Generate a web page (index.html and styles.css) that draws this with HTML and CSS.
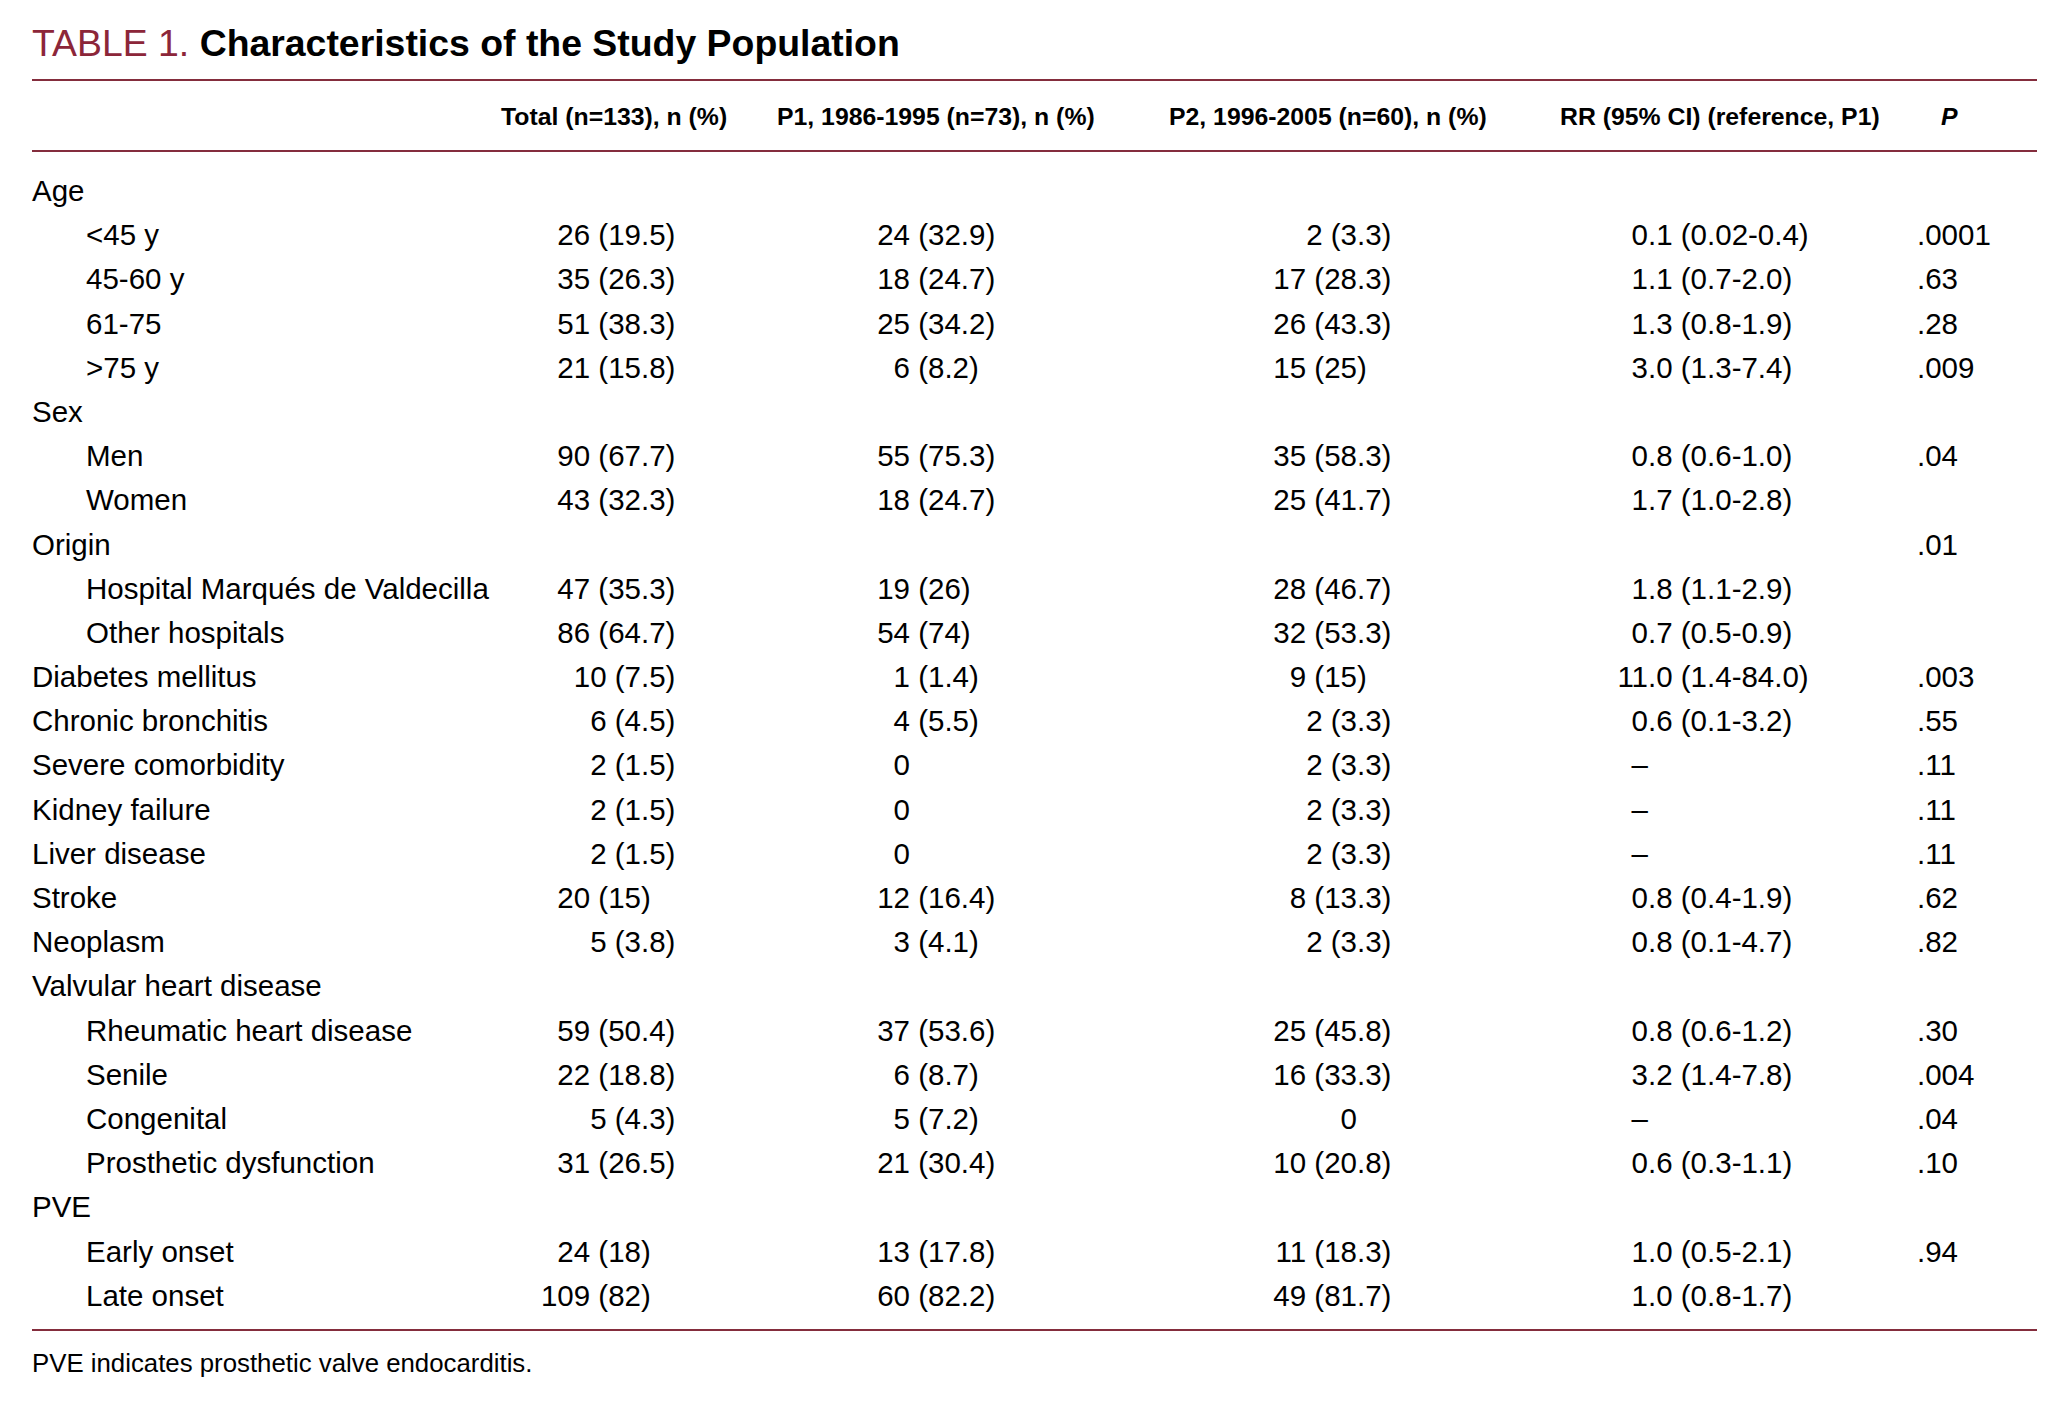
FILE: index.html
```html
<!DOCTYPE html>
<html lang="en">
<head>
<meta charset="utf-8">
<title>Table 1. Characteristics of the Study Population</title>
<link rel="stylesheet" href="styles.css">
</head>
<body>
<div class="wrap">
  <h1 class="title"><span class="num">TABLE 1.</span> <span class="name">Characteristics of the Study Population</span></h1>
  <div class="thead">
    <div></div>
    <div>Total (n=133), n (%)</div>
    <div>P1, 1986-1995 (n=73), n (%)</div>
    <div>P2, 1996-2005 (n=60), n (%)</div>
    <div>RR (95% CI) (reference, P1)</div>
    <div class="ph"><i>P</i></div>
  </div>
  <div class="tbody">
    <div class="row"><div class="lab">Age</div></div>
    <div class="row"><div class="lab in">&lt;45 y</div><div class="c c1"><span class="a">26 (19</span>.5)</div><div class="c c2"><span class="a">24</span> (32.9)</div><div class="c c3"><span class="a">2 (3</span>.3)</div><div class="c c4"><span class="a">0</span>.1 (0.02-0.4)</div><div class="c c5">.0001</div></div>
    <div class="row"><div class="lab in">45-60 y</div><div class="c c1"><span class="a">35 (26</span>.3)</div><div class="c c2"><span class="a">18</span> (24.7)</div><div class="c c3"><span class="a">17 (28</span>.3)</div><div class="c c4"><span class="a">1</span>.1 (0.7-2.0)</div><div class="c c5">.63</div></div>
    <div class="row"><div class="lab in">61-75</div><div class="c c1"><span class="a">51 (38</span>.3)</div><div class="c c2"><span class="a">25</span> (34.2)</div><div class="c c3"><span class="a">26 (43</span>.3)</div><div class="c c4"><span class="a">1</span>.3 (0.8-1.9)</div><div class="c c5">.28</div></div>
    <div class="row"><div class="lab in">&gt;75 y</div><div class="c c1"><span class="a">21 (15</span>.8)</div><div class="c c2"><span class="a">6</span> (8.2)</div><div class="c c3"><span class="a">15 (25</span>)</div><div class="c c4"><span class="a">3</span>.0 (1.3-7.4)</div><div class="c c5">.009</div></div>
    <div class="row"><div class="lab">Sex</div></div>
    <div class="row"><div class="lab in">Men</div><div class="c c1"><span class="a">90 (67</span>.7)</div><div class="c c2"><span class="a">55</span> (75.3)</div><div class="c c3"><span class="a">35 (58</span>.3)</div><div class="c c4"><span class="a">0</span>.8 (0.6-1.0)</div><div class="c c5">.04</div></div>
    <div class="row"><div class="lab in">Women</div><div class="c c1"><span class="a">43 (32</span>.3)</div><div class="c c2"><span class="a">18</span> (24.7)</div><div class="c c3"><span class="a">25 (41</span>.7)</div><div class="c c4"><span class="a">1</span>.7 (1.0-2.8)</div><div class="c c5"></div></div>
    <div class="row"><div class="lab">Origin</div><div class="c c1"></div><div class="c c2"></div><div class="c c3"></div><div class="c c4"></div><div class="c c5">.01</div></div>
    <div class="row"><div class="lab in">Hospital Marqués de Valdecilla</div><div class="c c1"><span class="a">47 (35</span>.3)</div><div class="c c2"><span class="a">19</span> (26)</div><div class="c c3"><span class="a">28 (46</span>.7)</div><div class="c c4"><span class="a">1</span>.8 (1.1-2.9)</div><div class="c c5"></div></div>
    <div class="row"><div class="lab in">Other hospitals</div><div class="c c1"><span class="a">86 (64</span>.7)</div><div class="c c2"><span class="a">54</span> (74)</div><div class="c c3"><span class="a">32 (53</span>.3)</div><div class="c c4"><span class="a">0</span>.7 (0.5-0.9)</div><div class="c c5"></div></div>
    <div class="row"><div class="lab">Diabetes mellitus</div><div class="c c1"><span class="a">10 (7</span>.5)</div><div class="c c2"><span class="a">1</span> (1.4)</div><div class="c c3"><span class="a">9 (15</span>)</div><div class="c c4"><span class="a">11</span>.0 (1.4-84.0)</div><div class="c c5">.003</div></div>
    <div class="row"><div class="lab">Chronic bronchitis</div><div class="c c1"><span class="a">6 (4</span>.5)</div><div class="c c2"><span class="a">4</span> (5.5)</div><div class="c c3"><span class="a">2 (3</span>.3)</div><div class="c c4"><span class="a">0</span>.6 (0.1-3.2)</div><div class="c c5">.55</div></div>
    <div class="row"><div class="lab">Severe comorbidity</div><div class="c c1"><span class="a">2 (1</span>.5)</div><div class="c c2"><span class="a">0</span></div><div class="c c3"><span class="a">2 (3</span>.3)</div><div class="c c4"><span class="a">–</span></div><div class="c c5">.11</div></div>
    <div class="row"><div class="lab">Kidney failure</div><div class="c c1"><span class="a">2 (1</span>.5)</div><div class="c c2"><span class="a">0</span></div><div class="c c3"><span class="a">2 (3</span>.3)</div><div class="c c4"><span class="a">–</span></div><div class="c c5">.11</div></div>
    <div class="row"><div class="lab">Liver disease</div><div class="c c1"><span class="a">2 (1</span>.5)</div><div class="c c2"><span class="a">0</span></div><div class="c c3"><span class="a">2 (3</span>.3)</div><div class="c c4"><span class="a">–</span></div><div class="c c5">.11</div></div>
    <div class="row"><div class="lab">Stroke</div><div class="c c1"><span class="a">20 (15</span>)</div><div class="c c2"><span class="a">12</span> (16.4)</div><div class="c c3"><span class="a">8 (13</span>.3)</div><div class="c c4"><span class="a">0</span>.8 (0.4-1.9)</div><div class="c c5">.62</div></div>
    <div class="row"><div class="lab">Neoplasm</div><div class="c c1"><span class="a">5 (3</span>.8)</div><div class="c c2"><span class="a">3</span> (4.1)</div><div class="c c3"><span class="a">2 (3</span>.3)</div><div class="c c4"><span class="a">0</span>.8 (0.1-4.7)</div><div class="c c5">.82</div></div>
    <div class="row"><div class="lab">Valvular heart disease</div></div>
    <div class="row"><div class="lab in">Rheumatic heart disease</div><div class="c c1"><span class="a">59 (50</span>.4)</div><div class="c c2"><span class="a">37</span> (53.6)</div><div class="c c3"><span class="a">25 (45</span>.8)</div><div class="c c4"><span class="a">0</span>.8 (0.6-1.2)</div><div class="c c5">.30</div></div>
    <div class="row"><div class="lab in">Senile</div><div class="c c1"><span class="a">22 (18</span>.8)</div><div class="c c2"><span class="a">6</span> (8.7)</div><div class="c c3"><span class="a">16 (33</span>.3)</div><div class="c c4"><span class="a">3</span>.2 (1.4-7.8)</div><div class="c c5">.004</div></div>
    <div class="row"><div class="lab in">Congenital</div><div class="c c1"><span class="a">5 (4</span>.3)</div><div class="c c2"><span class="a">5</span> (7.2)</div><div class="c c3"><span class="a">0</span></div><div class="c c4"><span class="a">–</span></div><div class="c c5">.04</div></div>
    <div class="row"><div class="lab in">Prosthetic dysfunction</div><div class="c c1"><span class="a">31 (26</span>.5)</div><div class="c c2"><span class="a">21</span> (30.4)</div><div class="c c3"><span class="a">10 (20</span>.8)</div><div class="c c4"><span class="a">0</span>.6 (0.3-1.1)</div><div class="c c5">.10</div></div>
    <div class="row"><div class="lab">PVE</div></div>
    <div class="row"><div class="lab in">Early onset</div><div class="c c1"><span class="a">24 (18</span>)</div><div class="c c2"><span class="a">13</span> (17.8)</div><div class="c c3"><span class="a">11 (18</span>.3)</div><div class="c c4"><span class="a">1</span>.0 (0.5-2.1)</div><div class="c c5">.94</div></div>
    <div class="row"><div class="lab in">Late onset</div><div class="c c1"><span class="a">109 (82</span>)</div><div class="c c2"><span class="a">60</span> (82.2)</div><div class="c c3"><span class="a">49 (81</span>.7)</div><div class="c c4"><span class="a">1</span>.0 (0.8-1.7)</div><div class="c c5"></div></div>
  </div>
  <p class="foot">PVE indicates prosthetic valve endocarditis.</p>
</div>
</body>
</html>
```
FILE: styles.css
```css
html, body {
  margin: 0;
  background: #ffffff;
}

body {
  padding: 22px 29px 0 32px;
  font-family: "Liberation Sans", Arial, Helvetica, sans-serif;
  color: #000000;
}

.wrap {
  width: 2005px;
}

.title {
  margin: 0 0 15px;
  font-size: 37.4px;
  line-height: 42px;
  font-weight: normal;
  white-space: nowrap;
}

.title .num {
  color: #8c2639;
}

.title .name {
  font-weight: bold;
}

.thead,
.row {
  display: grid;
  grid-template-columns: 469px 276px 392px 391px 357px 120px;
}

.thead {
  border-top: 2px solid #842d3d;
  border-bottom: 2px solid #842d3d;
  padding: 21px 0 18px;
  font-size: 24.8px;
  line-height: 30px;
  font-weight: bold;
  white-space: nowrap;
}

.thead .ph {
  padding-left: 24px;
}

.tbody {
  padding: 17px 0 11px;
  border-bottom: 2px solid #842d3d;
}

.row {
  font-size: 29.5px;
  line-height: 44.2px;
  height: 44.2px;
  white-space: pre;
}

.lab.in {
  padding-left: 54px;
}

.c .a {
  display: inline-block;
  text-align: right;
}

.c1 .a {
  width: 140px;
}

.c2 .a {
  width: 133px;
}

.c3 .a {
  width: 188px;
}

.c4 .a {
  width: 88px;
}

.foot {
  margin: 17px 0 0;
  font-size: 25.8px;
  line-height: 30px;
}
```
